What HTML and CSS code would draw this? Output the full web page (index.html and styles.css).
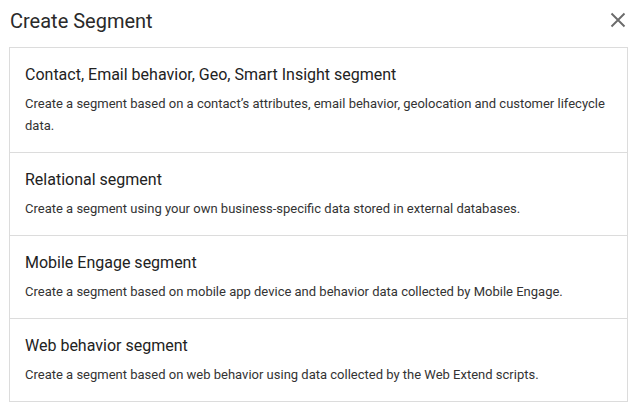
FILE: index.html
```html
<!DOCTYPE html>
<html>
<head>
<meta charset="utf-8">
<link rel="stylesheet" href="styles.css">
</head>
<body>
<div class="dialog">
  <div class="header">
    <h1 class="title">Create Segment</h1>
    <button class="close" aria-label="Close">
      <svg width="16" height="16" viewBox="0 0 16 16"><path d="M1.5 1.5 L14.5 14.5 M14.5 1.5 L1.5 14.5" stroke="#6b6b6b" stroke-width="1.9" fill="none"/></svg>
    </button>
  </div>
  <div class="list">
    <div class="item">
      <div class="item-title">Contact, Email behavior, Geo, Smart Insight segment</div>
      <div class="item-desc">Create a segment based on a contact’s attributes, email behavior, geolocation and customer lifecycle data.</div>
    </div>
    <div class="item">
      <div class="item-title">Relational segment</div>
      <div class="item-desc">Create a segment using your own business-specific data stored in external databases.</div>
    </div>
    <div class="item">
      <div class="item-title">Mobile Engage segment</div>
      <div class="item-desc">Create a segment based on mobile app device and behavior data collected by Mobile Engage.</div>
    </div>
    <div class="item">
      <div class="item-title">Web behavior segment</div>
      <div class="item-desc">Create a segment based on web behavior using data collected by the Web Extend scripts.</div>
    </div>
  </div>
</div>
</body>
</html>
```
FILE: styles.css
```css
html, body {
  margin: 0;
  padding: 0;
  background: #fff;
}
body {
  font-family: Roboto, "Liberation Sans", sans-serif;
  color: #333;
}
.dialog {
  padding: 0 7px 0 9px;
}
.header {
  display: flex;
  align-items: center;
  justify-content: space-between;
  height: 47px;
  padding-left: 1px;
}
.title {
  margin: 0;
  font-size: 20px;
  font-weight: 400;
  line-height: 24px;
  color: #2a2a2a;
  padding-bottom: 5px;
}
.close {
  border: 0;
  background: none;
  padding: 0;
  width: 16px;
  height: 16px;
  margin-right: 2px;
  margin-bottom: 7px;
  cursor: pointer;
}
.close svg { display: block; }
.list {
  border: 1px solid #dcdcdc;
}
.item {
  padding: 17px 15px 15px;
}
.item + .item {
  border-top: 1px solid #dcdcdc;
}
.item-title {
  font-size: 16px;
  line-height: 20px;
  color: #222;
}
.item-desc {
  margin-top: 8px;
  font-size: 13px;
  line-height: 22px;
  color: #333;
}
```
